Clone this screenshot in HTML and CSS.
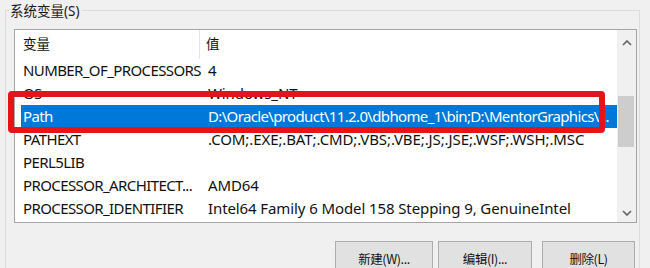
FILE: index.html
```html
<!DOCTYPE html>
<html lang="zh">
<head>
<meta charset="utf-8">
<link rel="stylesheet" href="styles.css">
</head>
<body>
<div class="group">
  <div class="group-title">系统变量(S)</div>
  <div class="list">
    <div class="table">
      <div class="row head"><span class="c1 hc1">变量</span><span class="c2 hc2">值</span></div>
      <div class="row"><span class="c1">NUMBER_OF_PROCESSORS</span><span class="c2">4</span></div>
      <div class="row"><span class="c1">OS</span><span class="c2">Windows_NT</span></div>
      <div class="row selected"><span class="c1">Path</span><span class="c2 clip">D:\Oracle\product\11.2.0\dbhome_1\bin;D:\MentorGraphics\...</span></div>
      <div class="row"><span class="c1">PATHEXT</span><span class="c2">.COM;.EXE;.BAT;.CMD;.VBS;.VBE;.JS;.JSE;.WSF;.WSH;.MSC</span></div>
      <div class="row"><span class="c1">PERL5LIB</span><span class="c2"></span></div>
      <div class="row"><span class="c1">PROCESSOR_ARCHITECT...</span><span class="c2">AMD64</span></div>
      <div class="row"><span class="c1">PROCESSOR_IDENTIFIER</span><span class="c2">Intel64 Family 6 Model 158 Stepping 9, GenuineIntel</span></div>
    </div>
    <div class="scrollbar">
      <div class="sb-btn sb-up"><svg width="10" height="6" viewBox="0 0 10 6"><polyline points="1,5 5,1 9,5" fill="none" stroke="#606060" stroke-width="1.6"/></svg></div>
      <div class="sb-track"><div class="sb-thumb"></div></div>
      <div class="sb-btn sb-down"><svg width="10" height="6" viewBox="0 0 10 6"><polyline points="1,1 5,5 9,1" fill="none" stroke="#606060" stroke-width="1.6"/></svg></div>
    </div>
  </div>
  <div class="buttons">
    <button class="btn btn-new">新建(W)...</button>
    <button class="btn btn-edit">编辑(I)...</button>
    <button class="btn btn-del">删除(L)</button>
  </div>
</div>
<div class="annotation"></div>
</body>
</html>
```
FILE: styles.css
```css
html, body {
  margin: 0;
  padding: 0;
}
body {
  width: 650px;
  height: 268px;
  overflow: hidden;
  background: #f0f0f0;
  font-family: "Noto Sans", "Noto Sans CJK SC", sans-serif;
  font-size: 15px;
  color: #111;
}
.group {
  margin: 10px 10px 0 5px;
  border: 1px solid #dcdcdc;
  border-bottom: none;
  padding: 0 2px 0 8px;
  height: 300px;
  box-sizing: border-box;
}
.group-title {
  width: max-content;
  margin: -10px 0 0 -5px;
  padding: 0 2px 0 1px;
  background: #f0f0f0;
  line-height: 20px;
  font-size: 13.5px;
  color: #1a1a1a;
}
.list {
  margin-top: 8px;
  height: 192px;
  border: 1px solid #a5a5a5;
  background: #fff;
  display: flex;
}
.table {
  flex: 1;
  overflow: hidden;
}
.row {
  display: flex;
  height: 23px;
  line-height: 23px;
  margin-left: 6px;
  white-space: nowrap;
}
.row.head {
  height: 29px;
  line-height: 29px;
  font-size: 13.5px;
}
.c1 {
  width: 185px;
  flex: none;
  padding-left: 2px;
  box-sizing: border-box;
  overflow: hidden;
  letter-spacing: -0.6px;
}
.c2 {
  padding-left: 2px;
  overflow: hidden;
  flex: 1;
  letter-spacing: -0.1px;
}
.c2.clip {
  letter-spacing: -0.65px;
}
.hc1 {
  width: 179px;
  border-right: 1px solid #e5e5e5;
  letter-spacing: 0;
}
.hc2 {
  padding-left: 6px;
  letter-spacing: 0;
}
.row.selected {
  background: #0078d7;
  color: #fff;
}
.scrollbar {
  width: 19px;
  background: #f0f0f0;
  display: flex;
  flex-direction: column;
}
.sb-btn {
  display: flex;
  align-items: center;
  justify-content: center;
}
.sb-up { height: 26px; }
.sb-down { height: 18px; }
.sb-track {
  flex: 1;
  padding-top: 40px;
}
.sb-thumb {
  height: 51px;
  margin: 0 2px 0 1px;
  background: #cdcdcd;
}
.buttons {
  display: flex;
  justify-content: flex-end;
  margin-top: 18px;
  padding-right: 2px;
}
.btn {
  height: 36px;
  border: 1px solid #adadad;
  background: #e1e1e1;
  font-family: "Noto Sans CJK SC", "Noto Sans", sans-serif;
  font-size: 12.5px;
  letter-spacing: -0.4px;
  color: #111;
  padding: 0 0 2px;
}
.btn-new { width: 98px; }
.btn-edit { width: 94px; margin-left: 5px; }
.btn-del { width: 93px; margin-left: 10px; }
.annotation {
  position: absolute;
  left: 8px;
  top: 91px;
  width: 585px;
  height: 30px;
  border: 6px solid #e5131a;
  border-radius: 4px;
}
```
